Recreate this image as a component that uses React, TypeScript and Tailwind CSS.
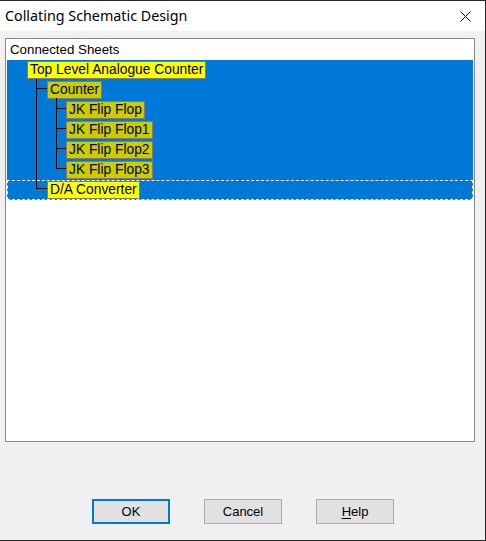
import React from 'react';

type Node = { label: string; level: number; bright?: boolean };

const nodes: Node[] = [
  { label: 'Top Level Analogue Counter', level: 0, bright: true },
  { label: 'Counter', level: 1 },
  { label: 'JK Flip Flop', level: 2 },
  { label: 'JK Flip Flop1', level: 2 },
  { label: 'JK Flip Flop2', level: 2 },
  { label: 'JK Flip Flop3', level: 2 },
  { label: 'D/A Converter', level: 1, bright: true },
];

const indent = ['pl-[20px]', 'pl-[40px]', 'pl-[59px]'];

function TreeLines() {
  return (
    <svg className="absolute left-0 top-0 pointer-events-none" width="466" height="140" shapeRendering="crispEdges">
      <g stroke="#000" strokeWidth="1" fill="none">
        <path d="M29.5 19 V128.5 M29 28.5 H40 M29 128.5 H40" />
        <path d="M49.5 38 V108.5 M49 48.5 H59 M49 68.5 H59 M49 88.5 H59 M49 108.5 H59" />
      </g>
    </svg>
  );
}

function Button({ children, primary }: { children: React.ReactNode; primary?: boolean }) {
  return (
    <button
      className={
        primary
          ? 'w-[78px] h-[25px] bg-[#e1e1e1] border-2 border-[#0078d7] text-[13px] text-black'
          : 'w-[78px] h-[25px] bg-[#e1e1e1] border border-[#adadad] text-[13px] text-black'
      }
    >
      {children}
    </button>
  );
}

export default function App() {
  return (
    <div
      className="w-[486px] h-[541px] bg-[#f0f0f0] border-t border-r border-b border-[#262626] flex flex-col"
      style={{ fontFamily: '"Liberation Sans", Arial, sans-serif' }}
    >
      {/* Title bar */}
      <div className="h-[30px] bg-white flex items-center justify-between pl-[5px] pr-[14px]">
        <span className="text-[14.3px] text-black" style={{ fontFamily: '"Noto Sans", "Open Sans", sans-serif' }}>
          Collating Schematic Design
        </span>
        <svg width="11" height="11" viewBox="0 0 11 11" className="mt-[1px]">
          <path d="M0.5 0.5 L10.5 10.5 M10.5 0.5 L0.5 10.5" stroke="#000" strokeWidth="1" />
        </svg>
      </div>

      {/* Tree box */}
      <div className="mt-[7px] ml-[5px] w-[470px] h-[404px] bg-white border border-[#828790] pt-[1px] px-[1px]">
        <div className="h-[20px] flex items-center pl-[3px] text-[13.3px] text-black">Connected Sheets</div>
        <div className="relative bg-[#0078d7]">
          {nodes.map((n, i) => (
            <div
              key={n.label}
              className={
                (i === nodes.length - 1 ? 'border border-dashed border-white ' : '') +
                'h-[20px] flex items-start pt-[1px] ' +
                indent[n.level]
              }
            >
              <span
                className={
                  (n.bright ? 'bg-[#ffff00] ' : 'bg-[#cccc00] ') +
                  'h-[18px] leading-[16px] px-[2px] border border-[#7f7f6a] text-[13.8px] text-black whitespace-nowrap ' +
                  (i === nodes.length - 1 ? '-mt-[1px] -ml-[1px]' : '')
                }
              >
                {n.label}
              </span>
            </div>
          ))}
          <TreeLines />
        </div>
      </div>

      {/* Buttons */}
      <div className="flex-1 flex items-end pb-[16px] pl-[92px] gap-[34px]">
        <Button primary>OK</Button>
        <Button>Cancel</Button>
        <Button>
          <span className="underline underline-offset-2">H</span>elp
        </Button>
      </div>
    </div>
  );
}
